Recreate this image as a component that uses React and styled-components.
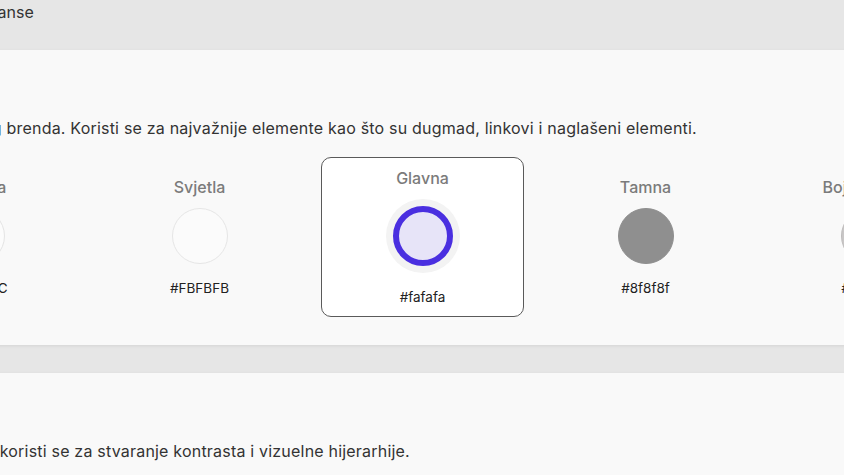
import React from "react";
import styled, { createGlobalStyle } from "styled-components";

const GlobalStyle = createGlobalStyle`
  html, body {
    margin: 0;
    padding: 0;
    background: #e6e6e6;
    overflow: hidden;
    font-family: Inter, "Noto Sans", sans-serif;
  }
`;

const swatches = [
  { name: "Svjetlija", hex: "#FCFCFC", fill: "#fcfcfc", edge: "#e4e4e4" },
  { name: "Svjetla", hex: "#FBFBFB", fill: "#fbfbfb", edge: "#e6e6e6" },
  { name: "Glavna", hex: "#fafafa", fill: "#e7e4f8", active: true },
  { name: "Tamna", hex: "#8f8f8f", fill: "#8f8f8f", edge: "#8f8f8f" },
  { name: "Boja obruba", hex: "#c9c7c7", fill: "#c9c7c7", edge: "#bdbbbb" },
];

const App = () => {
  return (
    <>
      <GlobalStyle />
      <Page>
        <TopNote>Paleta boja i nijanse</TopNote>
        <Section>
          <Heading>Primarna</Heading>
          <Description>
            To je boja našeg brenda. Koristi se za najvažnije elemente kao što
            su dugmad, linkovi i naglašeni elementi.
          </Description>
          <SwatchGrid>
            {swatches.map((s) => (
              <Swatch key={s.name} $active={s.active}>
                <Label>{s.name}</Label>
                {s.active ? (
                  <Halo>
                    <Dot $fill={s.fill} $active />
                  </Halo>
                ) : (
                  <Dot $fill={s.fill} $edge={s.edge} />
                )}
                <Hex>{s.hex}</Hex>
              </Swatch>
            ))}
          </SwatchGrid>
        </Section>
        <Section>
          <Heading>Neutralne</Heading>
          <Description>
            Neutralna skala koristi se za stvaranje kontrasta i vizuelne
            hijerarhije.
          </Description>
        </Section>
      </Page>
    </>
  );
};

export default App;

const Page = styled.div`
  margin-left: -149px;
  width: 1143px;
  display: flex;
  flex-direction: column;
  gap: 28px;
`;

const TopNote = styled.div`
  padding: 3px 0 0 33px;
  margin-bottom: 1px;
  font-size: 16px;
  line-height: 18px;
  color: #333;
`;

const Section = styled.section`
  background: #f9f9f9;
  padding: 24px 24px 28px;
  box-shadow: 0 1px 3px rgba(0, 0, 0, 0.08);
  box-sizing: border-box;
`;

const Heading = styled.h2`
  margin: 0 0 16px;
  font-size: 18px;
  line-height: 28px;
  font-weight: 600;
  color: #1f1f1f;
`;

const Description = styled.p`
  margin: 0;
  font-size: 16px;
  letter-spacing: 0.2px;
  line-height: 21px;
  color: #333;
`;

const SwatchGrid = styled.div`
  margin-top: 18px;
  display: grid;
  grid-template-columns: repeat(5, 203px);
  gap: 20px;
`;

const Swatch = styled.div`
  height: 160px;
  box-sizing: border-box;
  display: flex;
  flex-direction: column;
  align-items: center;
  justify-content: center;
  border-radius: 10px;
  border: 1.5px solid ${(p) => (p.$active ? "#5a5a5a" : "transparent")};
  background: ${(p) => (p.$active ? "#ffffff" : "transparent")};
`;

const Label = styled.div`
  font-size: 16px;
  line-height: 18px;
  font-weight: 500;
  color: #7b7b7b;
  margin-bottom: 12px;
`;

const Halo = styled.div`
  width: 74px;
  height: 74px;
  border-radius: 50%;
  background: #f3f3f3;
  display: flex;
  align-items: center;
  justify-content: center;
`;

const Dot = styled.div`
  width: ${(p) => (p.$active ? "60px" : "56px")};
  height: ${(p) => (p.$active ? "60px" : "56px")};
  box-sizing: border-box;
  border-radius: 50%;
  background: ${(p) => p.$fill};
  border: ${(p) => (p.$active ? "6px solid #4a2fe0" : `1px solid ${p.$edge}`)};
`;

const Hex = styled.div`
  margin-top: 16px;
  font-size: 13.5px;
  line-height: 16px;
  color: #222;
`;
